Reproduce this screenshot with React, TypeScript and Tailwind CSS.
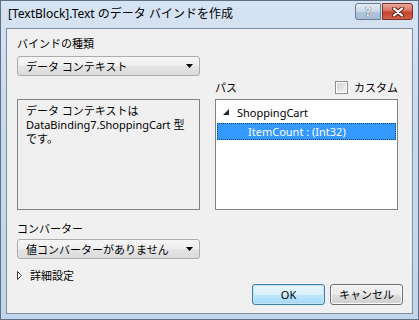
import React from "react";

function Combo({ label }: { label: string }) {
  return (
    <div className="flex h-[20px] w-full items-center justify-between rounded-[3px] border border-[#acacac] bg-[linear-gradient(#f6f6f6_0%,#eeeeee_50%,#e4e4e4_51%,#dcdcdc_100%)] pl-[8px] pr-[6px]">
      <span className="leading-none">{label}</span>
      <svg width="7" height="4" viewBox="0 0 7 4">
        <polygon points="0,0 7,0 3.5,4" fill="#000" />
      </svg>
    </div>
  );
}

function Button({ label, primary }: { label: string; primary?: boolean }) {
  return (
    <div
      className={
        primary
          ? "flex h-[21px] items-center justify-center rounded-[3px] border border-[#3c7fb1] bg-[linear-gradient(#eaf6fd_0%,#d9f0fc_50%,#bee6fd_51%,#a7d9f5_100%)] shadow-[inset_0_0_0_1px_#c4e5f6]"
          : "flex h-[21px] items-center justify-center rounded-[3px] border border-[#707070] bg-[linear-gradient(#f2f2f2_0%,#ebebeb_50%,#dddddd_51%,#cfcfcf_100%)] shadow-[inset_0_0_0_1px_#fcfcfc]"
      }
    >
      <span className="leading-none">{label}</span>
    </div>
  );
}

export default function App() {
  return (
    <div className="flex h-[320px] w-[419px] flex-col border border-[#5f7187] bg-[linear-gradient(#d6e3f2_0%,#c8daee_40%,#c1d5ec_100%)] px-[5px] pb-[5px] font-['Noto_Sans','Noto_Sans_CJK_JP',sans-serif] text-[11px] text-black">
      {/* title bar */}
      <div className="flex h-[27px] items-start">
        <div className="flex h-[26px] flex-1 items-center pl-[2px]">
          <span className="text-[12px] leading-none">[TextBlock].Text のデータ バインドを作成</span>
        </div>
        <div className="mt-[2px] flex gap-[1px]">
          <div className="flex h-[17px] w-[26px] items-center justify-center rounded-l-[3px] border border-[#6a7c93] bg-[linear-gradient(#e3ebf5_0%,#c9d7e8_50%,#b2c5dc_51%,#a8bcd6_100%)]">
            <span className="text-[12px] font-bold leading-none text-[#f4f6f9] [text-shadow:0_0_1px_#4b5a6e,0_0_1px_#4b5a6e]">?</span>
          </div>
          <div className="flex h-[17px] w-[31px] items-center justify-center rounded-r-[3px] border border-[#7b3027] bg-[linear-gradient(#eaa99c_0%,#d9715f_45%,#c7432e_55%,#d0614a_100%)]">
            <svg width="12" height="10" viewBox="0 0 12 10">
              <path d="M2 1.5 L10 8.5 M10 1.5 L2 8.5" stroke="#5a1e16" strokeWidth="4" strokeLinecap="round" />
              <path d="M2 1.5 L10 8.5 M10 1.5 L2 8.5" stroke="#ffffff" strokeWidth="2.2" strokeLinecap="round" />
            </svg>
          </div>
        </div>
      </div>

      {/* client area */}
      <div className="flex flex-1 border border-[#7f8c9c] bg-[#f0f0f0] pl-[10px] pt-[4px]">
        {/* left column */}
        <div className="flex w-[183px] flex-col">
          <div className="flex h-[20px] items-center">
            <span className="leading-none">バインドの種類</span>
          </div>
          <div className="mt-[3px]">
            <Combo label="データ コンテキスト" />
          </div>
          <div className="mt-[23px] h-[111px] whitespace-nowrap border border-[#828282] px-[8px] pt-[4px] leading-[14px]">
            データ コンテキストは
            <br />
            DataBinding7.ShoppingCart 型
            <br />
            です。
          </div>
          <div className="mt-[8px] flex h-[20px] items-center">
            <span className="leading-none">コンバーター</span>
          </div>
          <div className="mt-[1px]">
            <Combo label="値コンバーターがありません" />
          </div>
          <div className="mt-[6px] flex h-[20px] items-center gap-[8px]">
            <svg width="5" height="9" viewBox="0 0 5 9">
              <polygon points="0.5,0.5 4.5,4.5 0.5,8.5" fill="#ffffff" stroke="#3a3a3a" strokeWidth="1" />
            </svg>
            <span className="leading-none">詳細設定</span>
          </div>
        </div>

        {/* right column */}
        <div className="ml-[15px] flex w-[188px] flex-col">
          <div className="mt-[44px] flex h-[20px] w-[183px] items-center justify-between">
            <span className="leading-none">パス</span>
            <div className="flex items-center gap-[6px]">
              <div className="h-[13px] w-[13px] border border-[#8f8f8f] bg-white p-[1px]">
                <div className="h-full w-full bg-[linear-gradient(135deg,#d0d3d8_0%,#f4f4f4_100%)]" />
              </div>
              <span className="leading-none">カスタム</span>
            </div>
          </div>
          <div className="mt-[2px] h-[111px] w-[183px] border border-[#828282] bg-white px-[1px] pt-[3px]">
            <div className="flex h-[18px] items-center pl-[6px]">
              <svg width="6" height="6" viewBox="0 0 6 6">
                <polygon points="6,0 6,6 0,6" fill="#262626" />
              </svg>
              <span className="ml-[8px] leading-none">ShoppingCart</span>
            </div>
            <div className="mt-[2px] flex h-[17px] items-center border border-dotted border-[#0c3f7a] bg-[#3399ff] pl-[30px] text-white">
              <span className="leading-none">ItemCount : (Int32)</span>
            </div>
          </div>
          <div className="mt-[74px] flex justify-end gap-[5px]">
            <div className="w-[73px]">
              <Button label="OK" primary />
            </div>
            <div className="w-[73px]">
              <Button label="キャンセル" />
            </div>
          </div>
        </div>
      </div>
    </div>
  );
}
